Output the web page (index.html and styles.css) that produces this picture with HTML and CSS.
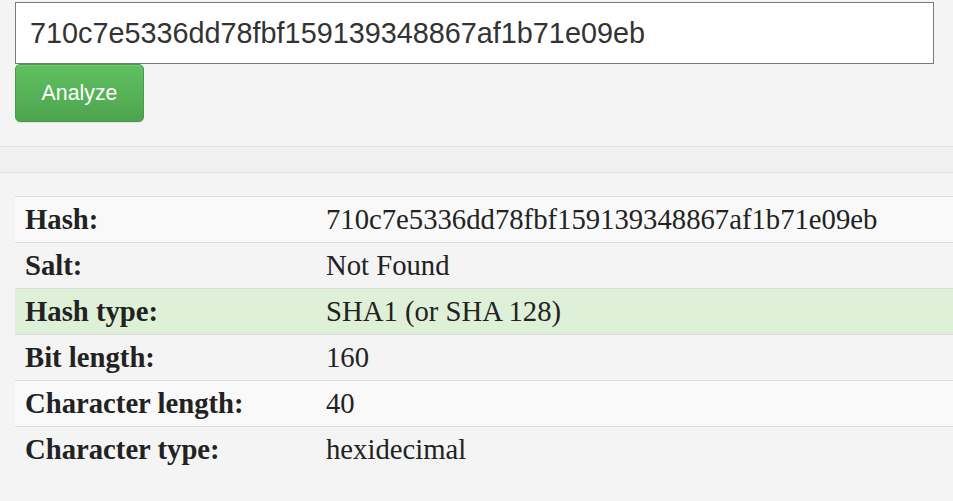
FILE: index.html
```html
<!DOCTYPE html>
<html>
<head>
<meta charset="utf-8">
<link rel="stylesheet" href="styles.css">
</head>
<body>
<div class="search">
  <input class="hash-input" type="text" value="710c7e5336dd78fbf159139348867af1b71e09eb">
  <button class="btn-analyze">Analyze</button>
</div>
<div class="band"></div>
<div class="result">
  <table class="info">
    <tr class="odd"><th>Hash:</th><td>710c7e5336dd78fbf159139348867af1b71e09eb</td></tr>
    <tr><th>Salt:</th><td>Not Found</td></tr>
    <tr class="success"><th>Hash type:</th><td>SHA1 (or SHA 128)</td></tr>
    <tr><th>Bit length:</th><td>160</td></tr>
    <tr class="odd"><th>Character length:</th><td>40</td></tr>
    <tr class="last"><th>Character type:</th><td>hexidecimal</td></tr>
  </table>
</div>
</body>
</html>
```
FILE: styles.css
```css
html, body {
  margin: 0;
  padding: 0;
  background: #f4f4f4;
}
body {
  width: 953px;
  height: 501px;
  overflow: hidden;
}
.search {
  padding: 2px 19px 0 15px;
  display: flex;
  flex-direction: column;
  align-items: flex-start;
}
.hash-input {
  box-sizing: border-box;
  width: 919px;
  height: 62px;
  margin: 0;
  border: 1px solid #7a7a7a;
  border-radius: 0;
  background: #fff;
  padding: 0 14px;
  font-family: "Liberation Sans", Arial, sans-serif;
  font-size: 28.8px;
  color: #333;
  outline: none;
}
.btn-analyze {
  box-sizing: border-box;
  width: 129px;
  height: 58px;
  margin: 0;
  border: 1px solid #48994a;
  border-radius: 5px;
  background: linear-gradient(to bottom, #5fc160 0%, #4ea44f 100%);
  color: #fff;
  font-family: "Liberation Sans", Arial, sans-serif;
  font-size: 21.3px;
  padding: 0;
  box-shadow: inset 0 1px 0 rgba(255,255,255,0.15), 0 1px 1px rgba(0,0,0,0.08);
}
.band {
  margin-top: 24px;
  height: 25px;
  border-top: 1px solid #e2e2e2;
  border-bottom: 1px solid #e2e2e2;
  background-color: #f0f0f0;
}
.result {
  padding: 23px 0 0 15px;
}
.info {
  width: 938px;
  border-collapse: collapse;
  font-family: "Liberation Serif", "Times New Roman", serif;
  font-size: 28.7px;
  color: #222;
}
.info th, .info td {
  border-top: 1px solid #dcdcdc;
  padding: 8px 10px;
  line-height: 29px;
  text-align: left;
  vertical-align: top;
  white-space: nowrap;
}
.info th {
  width: 281px;
  font-weight: bold;
}
.info tr.odd {
  background: #f9f9f9;
}
.info tr.success {
  background: #dff0d8;
}
```
